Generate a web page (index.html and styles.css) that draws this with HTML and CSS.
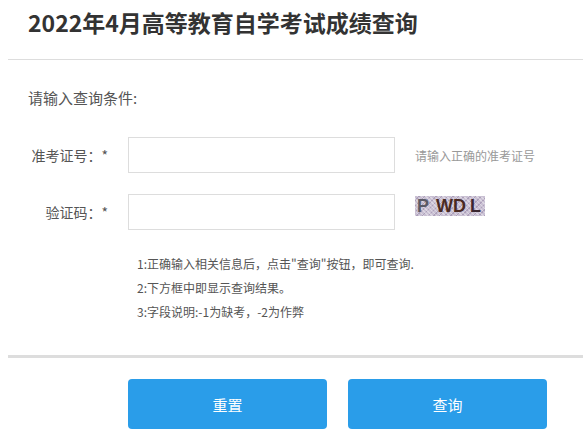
FILE: index.html
```html
<!DOCTYPE html>
<html lang="zh-CN">
<head>
    <meta charset="UTF-8">
    <meta name="viewport" content="width=device-width, initial-scale=1.0">
    <title>2022年4月高等教育自学考试成绩查询</title>
    <link rel="stylesheet" href="styles.css">
</head>
<body>
    <div class="page">
        <!-- 标题 -->
        <div class="header">
            <h1>2022年4月高等教育自学考试成绩查询</h1>
        </div>

        <!-- 查询表单 -->
        <div class="form">
            <p class="tip">请输入查询条件:</p>

            <div class="row">
                <label class="label">准考证号：*</label>
                <input class="field" type="text">
                <span class="hint">请输入正确的准考证号</span>
            </div>

            <div class="row">
                <label class="label">验证码：*</label>
                <input class="field" type="text">
                <span class="captcha"><b class="c1">P</b><b class="c2">WD</b><b class="c3">L</b></span>
            </div>

            <ul class="notes">
                <li>1:正确输入相关信息后，点击"查询"按钮，即可查询.</li>
                <li>2:下方框中即显示查询结果。</li>
                <li>3:字段说明:-1为缺考，-2为作弊</li>
            </ul>
        </div>

        <div class="actions">
            <button class="btn">重置</button>
            <button class="btn">查询</button>
        </div>
    </div>
</body>
</html>
```

FILE: styles.css
```css
body {
    margin: 0;
    font-family: "Noto Sans CJK SC", "Liberation Sans", sans-serif;
    color: #555;
    background: #fff;
}

.page {
    padding-left: 8px;
}

.header {
    height: 59px;
    border-bottom: 1px solid #ddd;
}

.header h1 {
    margin: 0;
    padding: 4px 0 0 20px;
    font-size: 23px;
    line-height: 36px;
    font-weight: bold;
    color: #333;
}

.form {
    padding: 0 0 31px 20px;
    border-bottom: 3px solid #ddd;
}

.tip {
    margin: 0;
    padding-top: 26px;
    font-size: 15px;
    line-height: 24px;
}

.row {
    display: flex;
    align-items: center;
    margin-top: 21px;
}

.row:first-of-type {
    margin-top: 27px;
}

.label {
    width: 80px;
    text-align: right;
    font-size: 14px;
}

.field {
    box-sizing: border-box;
    width: 267px;
    height: 36px;
    margin-left: 20px;
    border: 1px solid #ddd;
    border-radius: 0;
    outline: none;
}

.hint {
    margin-left: 20px;
    font-size: 12px;
    color: #999;
}

.captcha {
    align-self: flex-start;
    margin: 2px 0 0 20px;
    width: 70px;
    height: 20px;
    display: flex;
    align-items: center;
    padding-left: 2px;
    box-sizing: border-box;
    background-color: #c9c0d3;
    background-image:
        repeating-linear-gradient(45deg, rgba(255, 255, 255, 0.35) 0 1px, transparent 1px 3px),
        repeating-linear-gradient(-45deg, rgba(120, 100, 140, 0.35) 0 1px, transparent 1px 4px);
    font-family: "Liberation Sans", sans-serif;
    font-size: 18px;
    line-height: 20px;
}

.captcha b {
    font-weight: bold;
}

.c1 {
    color: #5a5a66;
}

.c2 {
    margin-left: 7px;
    color: #4a2a22;
}

.c3 {
    margin-left: 4px;
    color: #3a2630;
}

.notes {
    list-style: none;
    margin: 22px 0 0 109px;
    padding: 0;
    font-size: 12px;
    line-height: 24px;
}

.actions {
    display: flex;
    gap: 21px;
    padding: 21px 0 0 120px;
}

.btn {
    width: 199px;
    height: 50px;
    border: none;
    border-radius: 4px;
    background-color: #2a9de9;
    color: #fff;
    font-family: "Noto Sans CJK SC", sans-serif;
    font-size: 15px;
    cursor: pointer;
}
```
